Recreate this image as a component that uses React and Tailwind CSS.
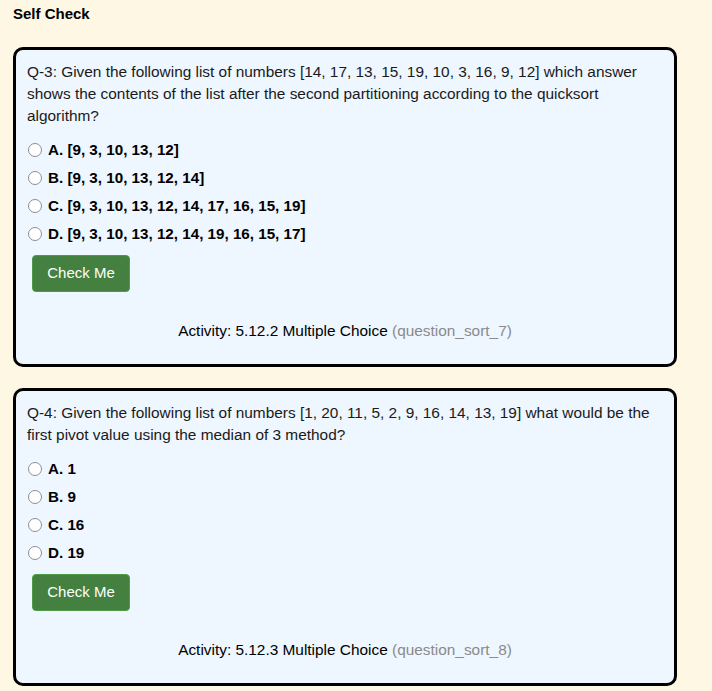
import React from "react";

const font = { fontFamily: '"Liberation Sans", Arial, Helvetica, sans-serif' };

function Radio() {
  return (
    <span className="inline-block w-[14px] h-[14px] rounded-full border-[1.5px] border-[#8e8e93] bg-white mr-[6px] shrink-0" />
  );
}

function Card({ q, options, activity, id }) {
  return (
    <div className="border-[3px] border-black rounded-[10px] bg-[#eef6ff] pl-[11px] pr-[11px] pt-[11px] pb-[22px]">
      <p className="text-[15.4px] leading-[22px] text-[#1a1a1a] pr-[9px]">{q}</p>
      <div className="mt-[9px] flex flex-col">
        {options.map((o) => (
          <label key={o} className="flex items-center h-[28px] pl-[1px] text-[15.2px] font-bold text-black">
            <Radio />
            {o}
          </label>
        ))}
      </div>
      <button className="mt-[7px] ml-[5px] w-[98px] h-[37px] rounded-[4px] bg-[#44803f] border border-[#4e9a48] text-white text-[15px]">
        Check Me
      </button>
      <div className="mt-[28px] text-center text-[15.4px] leading-[22px] text-black">
        Activity: {activity} <span className="text-[#8a8a8a]">({id})</span>
      </div>
    </div>
  );
}

export default function App() {
  return (
    <div style={font} className="min-h-[691px] bg-[#fdf7e4] pl-[13px] pr-[35px] pt-[4px] pb-[4px]">
      <h2 className="text-[15px] font-bold leading-[20px] text-black">Self Check</h2>
      <div className="mt-[23px] flex flex-col gap-[21px]">
        <Card
          q="Q-3: Given the following list of numbers [14, 17, 13, 15, 19, 10, 3, 16, 9, 12] which answer shows the contents of the list after the second partitioning according to the quicksort algorithm?"
          options={[
            "A. [9, 3, 10, 13, 12]",
            "B. [9, 3, 10, 13, 12, 14]",
            "C. [9, 3, 10, 13, 12, 14, 17, 16, 15, 19]",
            "D. [9, 3, 10, 13, 12, 14, 19, 16, 15, 17]",
          ]}
          activity="5.12.2 Multiple Choice"
          id="question_sort_7"
        />
        <Card
          q="Q-4: Given the following list of numbers [1, 20, 11, 5, 2, 9, 16, 14, 13, 19] what would be the first pivot value using the median of 3 method?"
          options={["A. 1", "B. 9", "C. 16", "D. 19"]}
          activity="5.12.3 Multiple Choice"
          id="question_sort_8"
        />
      </div>
    </div>
  );
}
